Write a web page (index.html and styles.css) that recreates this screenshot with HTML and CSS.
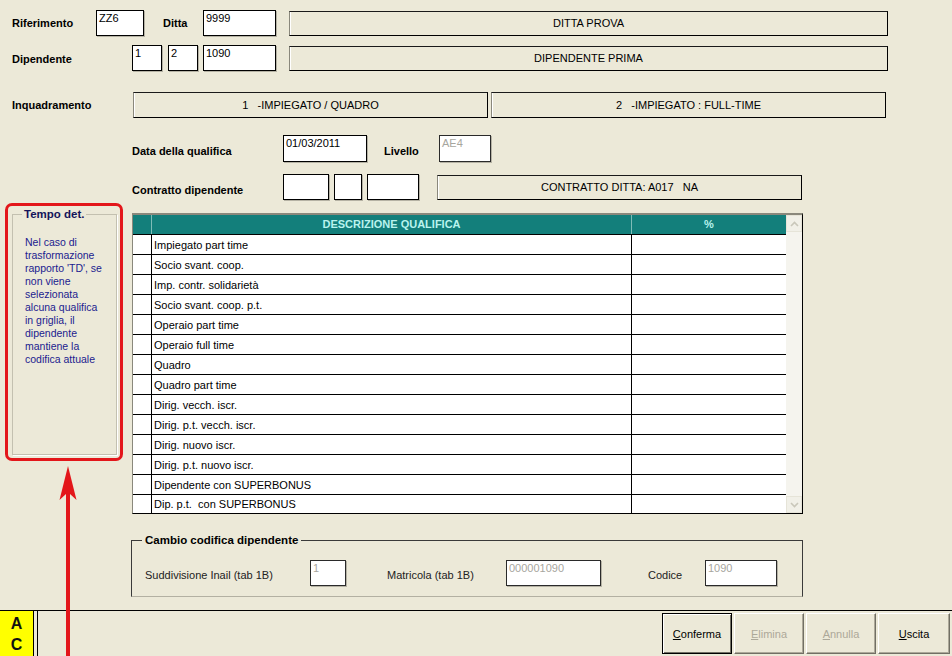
FILE: index.html
```html
<!DOCTYPE html>
<html lang="it">
<head>
  <meta charset="UTF-8" />
  <title>Cambio qualifica dipendente</title>
  <link rel="stylesheet" href="styles.css">
</head>
<body>

<div class="screen">

  <div class="form-top">
    <div class="row r1">
      <span class="lbl lbl-first">Riferimento</span>
      <div class="field f-rif">ZZ6</div>
      <span class="lbl lbl-ditta">Ditta</span>
      <div class="field f-code">9999</div>
      <div class="panel p-wide">DITTA PROVA</div>
    </div>

    <div class="row r2">
      <span class="lbl lbl-dip">Dipendente</span>
      <div class="field f-small">1</div>
      <div class="field f-small f-gap">2</div>
      <div class="field f-code f-gap2">1090</div>
      <div class="panel p-wide">DIPENDENTE PRIMA</div>
    </div>

    <div class="row r3">
      <span class="lbl lbl-inq">Inquadramento</span>
      <div class="panel p-inq1">1&nbsp;&nbsp;&nbsp;-IMPIEGATO / QUADRO</div>
      <div class="panel p-inq2">2&nbsp;&nbsp;&nbsp;-IMPIEGATO : FULL-TIME</div>
    </div>

    <div class="row r4">
      <span class="lbl lbl-sub">Data della qualifica</span>
      <div class="field f-date">01/03/2011</div>
      <span class="lbl lbl-liv">Livello</span>
      <div class="field f-liv disabled">AE4</div>
    </div>

    <div class="row r5">
      <span class="lbl lbl-sub">Contratto dipendente</span>
      <div class="field f-c1"></div>
      <div class="field f-c2"></div>
      <div class="field f-c3"></div>
      <div class="panel p-contr">CONTRATTO DITTA: A017&nbsp;&nbsp;&nbsp;NA</div>
    </div>
  </div>

  <div class="middle">
    <aside class="side">
      <div class="hint-frame">
        <fieldset class="hint">
          <legend>Tempo det.</legend>
          <p>Nel caso di<br>trasformazione<br>rapporto 'TD', se<br>non viene<br>selezionata<br>alcuna qualifica<br>in griglia, il<br>dipendente<br>mantiene la<br>codifica attuale</p>
        </fieldset>
      </div>
    </aside>

    <div class="content">
      <div class="grid">
        <div class="grid-body">
          <div class="grid-row grid-head">
            <div class="cell"></div>
            <div class="cell">DESCRIZIONE QUALIFICA</div>
            <div class="cell">%</div>
          </div>
          <div class="grid-row"><div class="cell"></div><div class="cell">Impiegato part time</div><div class="cell"></div></div>
          <div class="grid-row"><div class="cell"></div><div class="cell">Socio svant. coop.</div><div class="cell"></div></div>
          <div class="grid-row"><div class="cell"></div><div class="cell">Imp. contr. solidarietà</div><div class="cell"></div></div>
          <div class="grid-row"><div class="cell"></div><div class="cell">Socio svant. coop. p.t.</div><div class="cell"></div></div>
          <div class="grid-row"><div class="cell"></div><div class="cell">Operaio part time</div><div class="cell"></div></div>
          <div class="grid-row"><div class="cell"></div><div class="cell">Operaio full time</div><div class="cell"></div></div>
          <div class="grid-row"><div class="cell"></div><div class="cell">Quadro</div><div class="cell"></div></div>
          <div class="grid-row"><div class="cell"></div><div class="cell">Quadro part time</div><div class="cell"></div></div>
          <div class="grid-row"><div class="cell"></div><div class="cell">Dirig. vecch. iscr.</div><div class="cell"></div></div>
          <div class="grid-row"><div class="cell"></div><div class="cell">Dirig. p.t. vecch. iscr.</div><div class="cell"></div></div>
          <div class="grid-row"><div class="cell"></div><div class="cell">Dirig. nuovo iscr.</div><div class="cell"></div></div>
          <div class="grid-row"><div class="cell"></div><div class="cell">Dirig. p.t. nuovo iscr.</div><div class="cell"></div></div>
          <div class="grid-row"><div class="cell"></div><div class="cell">Dipendente con SUPERBONUS</div><div class="cell"></div></div>
          <div class="grid-row"><div class="cell"></div><div class="cell">Dip. p.t.&nbsp;&nbsp;con SUPERBONUS</div><div class="cell"></div></div>
        </div>
        <div class="scrollbar">
          <div class="scroll-btn">
            <svg width="9" height="6" viewBox="0 0 9 6"><path d="M1 5 L4.5 1.5 L8 5" fill="none" stroke="#c9c7ba" stroke-width="1.6"/></svg>
          </div>
          <div class="scroll-track"></div>
          <div class="scroll-btn">
            <svg width="9" height="6" viewBox="0 0 9 6"><path d="M1 1 L4.5 4.5 L8 1" fill="none" stroke="#c9c7ba" stroke-width="1.6"/></svg>
          </div>
        </div>
      </div>

      <fieldset class="cambio">
        <legend>Cambio codifica dipendente</legend>
        <div class="cambio-row">
          <span class="clbl clbl-1">Suddivisione Inail (tab 1B)</span>
          <div class="field disabled f-inail">1</div>
          <span class="clbl clbl-2">Matricola (tab 1B)</span>
          <div class="field disabled f-matr">000001090</div>
          <span class="clbl clbl-3">Codice</span>
          <div class="field disabled f-cod">1090</div>
        </div>
      </fieldset>
    </div>
  </div>

  <div class="toolbar">
    <div class="ac-badge"><span>A</span><span>C</span></div>
    <div class="tb-sep"></div>
    <div class="buttons">
      <button class="btn btn-default"><u>C</u>onferma</button>
      <button class="btn btn-off"><u>E</u>limina</button>
      <button class="btn btn-off"><u>A</u>nnulla</button>
      <button class="btn btn-exit"><u>U</u>scita</button>
    </div>
  </div>

  <!-- red callout arrow pointing at the "Tempo det." box -->
  <svg class="arrow" width="20" height="190" viewBox="0 0 20 190">
    <path d="M10 0 L18.5 34 L12 28 L12 190 L8 190 L8 28 L1.5 34 Z" fill="#e3161a"/>
  </svg>

</div>

</body>
</html>
```

FILE: styles.css
```css
* {
  box-sizing: border-box;
  font-family: 'Liberation Sans', Arial, sans-serif;
}

body {
  margin: 0;
  background-color: #ece9d8;
  color: #000;
}

.screen {
  position: relative;
  width: 952px;
  height: 656px;
  overflow: hidden;
  display: flex;
  flex-direction: column;
  font-size: 11px;
}

/* ---------- top form ---------- */

.form-top {
  padding-top: 10px;
  padding-left: 12px;
}

.row {
  display: flex;
  align-items: center;
  height: 26px;
}

.r2 { margin-top: 9px; }
.r3 { margin-top: 21px; }
.r4 { margin-top: 17px; height: 27px; padding-left: 120px; }
.r5 { margin-top: 12px; padding-left: 120px; }

.lbl {
  font-weight: bold;
  font-size: 11px;
  white-space: nowrap;
}

.lbl-first { width: 84px; }
.lbl-ditta { width: 40px; margin-left: 19px; }
.lbl-dip { width: 120px; padding-top: 2px; }
.lbl-inq { width: 121px; }
.lbl-sub { width: 151px; padding-top: 5px; }
.lbl-liv { width: 55px; margin-left: 17px; padding-top: 5px; }

.field {
  height: 26px;
  background-color: #fff;
  border: 1px solid #000;
  box-shadow: 1px 1px 0 #b5b2a4;
  padding: 1px 2px;
  line-height: 13px;
  font-size: 11px;
  white-space: nowrap;
  overflow: hidden;
}

.field.disabled {
  color: #a7a69e;
  border-color: #2a2a2a;
}

.f-rif { width: 48px; }
.f-code { width: 73px; }
.f-small { width: 30px; }
.f-gap { margin-left: 6px; }
.f-gap2 { margin-left: 5px; }
.f-date { width: 84px; height: 27px; }
.f-liv { width: 52px; height: 27px; border-color: #777; }
.f-c1 { width: 46px; }
.f-c2 { width: 28px; margin-left: 5px; }
.f-c3 { width: 52px; margin-left: 5px; }

.panel {
  height: 25px;
  display: flex;
  align-items: center;
  justify-content: center;
  border: 1px solid #000;
  border-left-color: #8a887c;
  border-top-color: #1a1a1a;
  box-shadow: inset 1px 0 #fff;
  font-size: 11px;
  white-space: nowrap;
}

.p-wide { width: 599px; margin-left: 13px; }
.p-inq1 { width: 355px; height: 26px; }
.p-inq2 { width: 395px; height: 26px; margin-left: 3px; }
.p-contr { width: 365px; margin-left: 18px; }

/* ---------- middle ---------- */

.middle {
  display: flex;
  height: 407px;
  margin-top: 3px;
}

.side {
  width: 132px;
  padding-left: 5px;
}

.hint-frame {
  width: 118px;
  height: 258px;
  border: 3px solid #e3161a;
  border-radius: 7px;
  padding: 2px 3px 3px 4px;
}

.hint {
  margin: 0;
  height: 100%;
  border: 1px solid #c3c0b0;
  box-shadow: 1px 1px 0 #fff;
  padding: 0 0 0 9px;
}

.hint legend {
  padding: 0 2px;
  font-weight: bold;
  font-size: 11.5px;
  line-height: 13px;
  color: #14145a;
}

.hint p {
  margin: 15px 0 0 0;
  padding-left: 3px;
  font-size: 10.5px;
  line-height: 13px;
  color: #1b1b8f;
  white-space: nowrap;
}

.content {
  padding-top: 10px;
}

/* ---------- grid ---------- */

.grid {
  display: flex;
  width: 671px;
  height: 301px;
  border: 1px solid #000;
  border-top: 2px solid #8a887c;
  border-left-color: #8a887c;
  background-color: #fff;
}

.grid-body {
  width: 653px;
}

.grid-row {
  display: grid;
  grid-template-columns: 19px 480px 154px;
  height: 20px;
  border-bottom: 1px solid #000;
}

.grid-row:last-child {
  border-bottom: none;
  height: 18px;
}

.grid-row .cell {
  border-right: 1px solid #000;
  padding-left: 2px;
  line-height: 20px;
  font-size: 11px;
  white-space: nowrap;
}

.grid-row:last-child .cell {
  line-height: 19px;
}

.grid-row .cell:last-child {
  border-right: none;
}

.grid-head {
  background-color: #137f7b;
  height: 20px;
}

.grid-head .cell {
  border-right-color: #7fbcb7;
  text-align: center;
  font-weight: bold;
  color: #b9f3ee;
  line-height: 19px;
  padding-left: 0;
}

.scrollbar {
  width: 16px;
  display: flex;
  flex-direction: column;
  background-color: #f5f4ee;
}

.scroll-btn {
  height: 17px;
  display: flex;
  align-items: center;
  justify-content: center;
  background-color: #f1f0e8;
  border: 1px solid #e6e4d8;
}

.scroll-track {
  flex-grow: 1;
}

/* ---------- cambio codifica ---------- */

.cambio {
  margin: 19px 0 0 -1px;
  width: 672px;
  height: 64px;
  padding: 0 0 0 13px;
  border: 1px solid #3a3a3a;
  border-bottom-color: #b3b0a2;
}

.cambio legend {
  padding: 0 3px;
  margin-left: -3px;
  font-weight: bold;
  font-size: 11.5px;
  line-height: 14px;
}

.cambio-row {
  display: flex;
  align-items: center;
  margin-top: 13px;
}

.clbl {
  font-size: 11px;
  color: #222;
  white-space: nowrap;
  padding-top: 3px;
}

.clbl-1 { width: 165px; }
.clbl-2 { width: 119px; margin-left: 41px; }
.clbl-3 { width: 57px; margin-left: 47px; }

.f-inail { width: 36px; }
.f-matr { width: 95px; }
.f-cod { width: 72px; }

/* ---------- bottom toolbar ---------- */

.toolbar {
  display: flex;
  height: 46px;
  border-top: 1px solid #000;
}

.ac-badge {
  width: 34px;
  background-color: #ffff00;
  border-right: 1px solid #000;
  display: flex;
  flex-direction: column;
  align-items: center;
  justify-content: center;
  font-family: 'DejaVu Sans Mono', monospace;
  font-weight: bold;
  font-size: 16px;
  line-height: 21px;
  color: #111;
}

.tb-sep {
  width: 1px;
  margin-left: 3px;
  background-color: #000;
}

.buttons {
  display: flex;
  gap: 2px;
  margin-left: auto;
  margin-right: 2px;
  padding-top: 2px;
}

.btn {
  width: 70px;
  height: 41px;
  background-color: #ece9d8;
  border: 1px solid;
  border-color: #fff #716f64 #716f64 #fff;
  box-shadow: inset -1px -1px #aca899;
  font-family: 'Liberation Sans', Arial, sans-serif;
  font-size: 11px;
  color: #000;
  padding: 0;
}

.btn-exit {
  width: 72px;
}

.btn-default {
  border: 1px solid #000;
  box-shadow: inset 1px 1px #fff, inset -1px -1px #716f64;
}

.btn-off {
  color: #aca899;
}

.arrow {
  position: absolute;
  left: 58px;
  top: 466px;
}
```
